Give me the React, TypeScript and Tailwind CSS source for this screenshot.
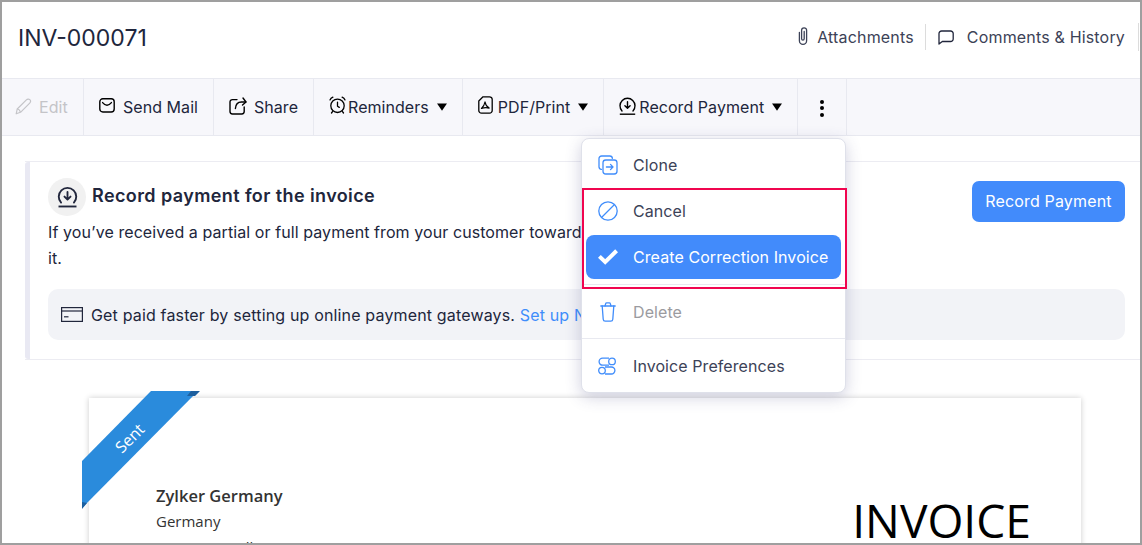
import React from 'react';

type IconProps = { className?: string };

const PencilIcon = ({ className }: IconProps) => (
  <svg viewBox="0 0 17 17" fill="none" stroke="currentColor" strokeWidth="1.2" strokeLinejoin="round" className={className}>
    <path d="M1.200 15.800l1-4.800L11.400 1.800c1-1 2.500-1 3.400-.1.900.9.900 2.400-.1 3.400l-9.200 9.200-4.300 1.500z" />
    <path d="M2.200 11c1.400.2 2.800 1.600 3.200 3.200" />
  </svg>
);

const MailIcon = ({ className }: IconProps) => (
  <svg viewBox="0 0 16 15" fill="none" stroke="currentColor" strokeWidth="1.4" className={className}>
    <rect x="0.8" y="0.8" width="14.4" height="13.2" rx="3" />
    <path d="M3.6 4.600c1.400 1.700 2.900 2.600 4.400 2.600s3-.9 4.400-2.600" strokeLinecap="round" />
  </svg>
);

const ShareIcon = ({ className }: IconProps) => (
  <svg viewBox="0 0 18 18" fill="none" stroke="currentColor" strokeWidth="1.4" strokeLinecap="round" strokeLinejoin="round" className={className}>
    <path d="M8 2.600H3.400A2.400 2.400 0 0 0 1 5v9.600A2.400 2.400 0 0 0 3.400 17h9.400a2.400 2.400 0 0 0 2.400-2.400V10" />
    <path d="M6.400 11.500c.3-3.700 2.500-6.500 6-6.500h4.400" />
    <path d="M14 1l3 4-3.500 3" />
  </svg>
);

const AlarmIcon = ({ className }: IconProps) => (
  <svg viewBox="0 0 17 18" fill="none" stroke="currentColor" strokeWidth="1.3" strokeLinecap="round" strokeLinejoin="round" className={className}>
    <circle cx="8.500" cy="9.800" r="6.700" />
    <path d="M8.500 6.200v4l1.800 1.200" />
    <path d="M1 3.900c.5-1.300 1.500-2.200 2.900-2.700" />
    <path d="M16 3.900c-.5-1.300-1.500-2.200-2.900-2.700" />
    <path d="M3.500 15.600l-1 1.400M13.500 15.600l1 1.400" />
  </svg>
);

const PdfIcon = ({ className }: IconProps) => (
  <svg viewBox="0 0 15 18" fill="none" stroke="currentColor" strokeWidth="1.3" strokeLinejoin="round" className={className}>
    <path d="M5 .8h6.400a2.700 2.700 0 0 1 2.800 2.700v10.900a2.700 2.700 0 0 1-2.800 2.800H3.600a2.700 2.700 0 0 1-2.800-2.800V5z" />
    <path d="M3.400 12.500c1.700-1.500 3.100-3.700 3.600-6.700.5 3 1.500 4.800 4.200 6.300-2.700-.8-5.200-.6-7.800.4z" strokeWidth="1.100" />
  </svg>
);

const RecordIcon = ({ className, strokeWidth = 1.4 }: IconProps & { strokeWidth?: number }) => (
  <svg viewBox="0 0 17 18" fill="none" stroke="currentColor" strokeWidth={strokeWidth} strokeLinecap="round" strokeLinejoin="round" className={className}>
    <path d="M3 13.400a7.500 7.500 0 1 1 11 0" />
    <path d="M8.500 4.200v6.400M5.900 8.200l2.600 2.600 2.600-2.600" />
    <path d="M.8 16.700h15.400" strokeLinecap="butt" />
  </svg>
);

const CaretIcon = () => (
  <svg viewBox="0 0 10 8" className="h-2 w-2.5 shrink-0" fill="currentColor">
    <path d="M0 .4h10L5 7.800z" />
  </svg>
);

const ClipIcon = ({ className }: IconProps) => (
  <svg viewBox="0 0 10 18" fill="none" stroke="currentColor" strokeWidth="1.300" strokeLinecap="round" className={className}>
    <path d="M6.200 4.500v7.300a1.300 1.300 0 0 1-2.600 0V3.300a2.500 2.500 0 0 1 5 0v10.400a3.600 3.600 0 0 1-7.200 0V5.500" />
  </svg>
);

const CommentIcon = ({ className }: IconProps) => (
  <svg viewBox="0 0 16 15" fill="none" stroke="currentColor" strokeWidth="1.300" strokeLinejoin="round" className={className}>
    <path d="M3.600 1h9A2.600 2.600 0 0 1 15.200 3.600v5.300a2.600 2.600 0 0 1-2.600 2.600H4.300L1 14V3.600A2.600 2.600 0 0 1 3.600 1z" />
  </svg>
);

const CardIcon = ({ className }: IconProps) => (
  <svg viewBox="0 0 22 15" fill="none" stroke="currentColor" strokeWidth="1.200" className={className}>
    <rect x="0.600" y="0.600" width="20.800" height="13.800" />
    <path d="M.6 4h20.800" />
    <path d="M3 9.800h4.500" />
  </svg>
);

const CloneIcon = ({ className }: IconProps) => (
  <svg viewBox="0 0 20 20" fill="none" stroke="currentColor" strokeWidth="1.300" strokeLinecap="round" strokeLinejoin="round" className={className}>
    <path d="M3.400 14.400A2.600 2.600 0 0 1 1 11.800V3.600A2.600 2.600 0 0 1 3.600 1h8.200a2.600 2.600 0 0 1 2.600 2.400" />
    <rect x="5" y="5" width="14" height="14" rx="2.800" />
    <path d="M8.400 12h6.600M12.500 9.400L15 12l-2.500 2.600" />
  </svg>
);

const CancelIcon = ({ className }: IconProps) => (
  <svg viewBox="0 0 20 20" fill="none" stroke="currentColor" strokeWidth="1.300" className={className}>
    <circle cx="10" cy="10" r="9.200" />
    <path d="M3.500 16.500l13-13" />
  </svg>
);

const CheckIcon = ({ className }: IconProps) => (
  <svg viewBox="0 0 20 16" fill="none" stroke="currentColor" strokeWidth="4" className={className}>
    <path d="M1.400 7.400l5.800 5.600L18.600 1.800" />
  </svg>
);

const TrashIcon = ({ className }: IconProps) => (
  <svg viewBox="0 0 16 20" fill="none" stroke="currentColor" strokeWidth="1.300" strokeLinecap="round" strokeLinejoin="round" className={className}>
    <path d="M.8 4h14.400" />
    <path d="M5 4l.7-2.400c.1-.5.5-.8 1-.8h2.600c.5 0 .9.3 1 .8L11 4" />
    <path d="M2.200 4l1 13.200c.1 1.100.9 2 2 2h5.600c1.100 0 1.900-.9 2-2l1-13.200" />
  </svg>
);

const PrefsIcon = ({ className }: IconProps) => (
  <svg viewBox="0 0 18 20" fill="none" stroke="currentColor" strokeWidth="1.300" className={className}>
    <path d="M11 2.200H4.600a3.500 3.500 0 0 0 0 7H11" />
    <circle cx="14" cy="5.400" r="3.300" />
    <path d="M7 11h6.400a3.500 3.500 0 0 1 0 7H7" />
    <circle cx="4" cy="14.600" r="3.300" />
  </svg>
);

const ToolbarItem = ({ icon, label, caret, gap = 'gap-2' }: { icon: React.ReactNode; label: string; caret?: boolean; gap?: string }) => (
  <div className="flex items-center border-r border-[#e8e9f0] px-[15px] text-[#21263c]">
    <div className={`flex items-center ${gap}`}>
      {icon}
      <span>{label}</span>
    </div>
    {caret && <span className="ml-2 text-black"><CaretIcon /></span>}
  </div>
);

const MenuItem = ({ icon, label, height = 'h-[44px]' }: { icon: React.ReactNode; label: string; height?: string }) => (
  <div className={`flex items-center pl-[16px] ${height}`}>
    <span className="flex w-[35px] shrink-0 text-[#408dfb]">{icon}</span>
    <span className="text-[#3c4257]">{label}</span>
  </div>
);

export default function App() {
  return (
    <div className="relative h-[545px] w-[1142px] overflow-hidden border-2 border-[#9f9f9f] bg-white font-['Inter',sans-serif] text-[16px]">
      {/* Header */}
      <header className="flex h-[76px] items-center justify-between pb-[4px] pl-4">
        <h1 className="text-[23px] text-[#21263c]">INV-000071</h1>
        <div className="mb-[2px] mr-[1px] flex items-center tracking-[0.17px] text-[#3c4257]">
          <div className="flex items-center border-r border-[#dcdcdc] py-[1px] pr-[11px]">
            <ClipIcon className="mr-[9px] h-[18px] w-[10px] -translate-y-[1px]" />
            <span>Attachments</span>
          </div>
          <div className="flex items-center pl-3 pr-[13px]">
            <CommentIcon className="mr-[13px] h-[15px] w-4 text-[#21263c]" />
            <span>Comments &amp; History</span>
          </div>
          <div className="h-7 border-r border-[#dcdcdc]" />
        </div>
      </header>

      {/* Toolbar */}
      <div className="flex h-[58px] border-y border-[#e8e9f0] bg-[#f7f7fb] tracking-[0.05px]">
        <div className="flex w-[82px] items-center gap-[7px] border-r border-[#e8e9f0] pl-[13px] text-[#c4c4c8]">
          <PencilIcon className="h-[17px] w-[17px] shrink-0 -translate-y-[1px]" />
          <span>Edit</span>
        </div>
        <ToolbarItem icon={<MailIcon className="h-[15px] w-4 -translate-y-[2px] text-black" />} label="Send Mail" />
        <ToolbarItem icon={<ShareIcon className="h-[18px] w-[18px] -translate-y-[1px] text-black" />} label="Share" gap="gap-[7px]" />
        <ToolbarItem icon={<AlarmIcon className="h-[18px] w-[17px] -translate-y-[2px] text-black" />} label="Reminders" caret gap="gap-[2px]" />
        <ToolbarItem icon={<PdfIcon className="h-[18px] w-[15px] -translate-y-[2px] text-black" />} label="PDF/Print" caret gap="gap-[5px]" />
        <ToolbarItem icon={<RecordIcon className="h-[19px] w-[17px] -translate-y-[1px] text-black" />} label="Record Payment" caret gap="gap-[3px]" />
        <div className="flex w-[49px] flex-col items-center justify-center gap-[2.500px] border-r border-[#e8e9f0] pt-[2px]">
          <span className="h-1 w-1 rounded-full bg-black" />
          <span className="h-1 w-1 rounded-full bg-black" />
          <span className="h-1 w-1 rounded-full bg-black" />
        </div>
      </div>

      {/* Banner */}
      <section className="ml-[23px] mt-[25px] flex h-[199px] border-y border-[#ececf2]">
        <div className="w-[5px] rounded-l-[3px] bg-[#e9e9f3]" />
        <div className="flex-1 pl-[18px] pr-[15px] pt-4">
          <div className="flex justify-between">
            <div>
              <div className="flex items-center gap-[6px]">
                <span className="flex h-[38px] w-[38px] items-center justify-center rounded-full bg-[#f1f1f1]">
                  <RecordIcon className="h-[21px] w-[21px] text-[#21263c]" strokeWidth={1.6} />
                </span>
                <h2 className="mb-[3px] text-[18px] font-semibold tracking-[0.4px] text-[#21263c]">Record payment for the invoice</h2>
              </div>
              <p className="mt-[3px] max-w-[760px] leading-[26px] tracking-[0.08px] text-[#21263c]">
                If you’ve received a partial or full payment from your customer towards this invoice, you can record it.
              </p>
            </div>
            <button className="mt-[3px] h-[41px] w-[153px] rounded-[7px] bg-[#428bfb] pb-[2px] tracking-[0.15px] text-white">Record Payment</button>
          </div>
          <div className="mt-[18px] flex h-[51px] items-center rounded-[10px] bg-[#f2f3f7] pl-[13px] tracking-[0.16px] text-[#21263c]">
            <CardIcon className="mr-2 h-[15px] w-[22px]" />
            <span>Get paid faster by setting up online payment gateways. <span className="text-[#408dfb]">Set up Now</span></span>
          </div>
        </div>
      </section>

      {/* Invoice sheet */}
      <section className="relative ml-[87px] mt-[38px] flex h-[300px] w-[992px] justify-between bg-white pl-[67px] pr-[50px] pt-[87px] font-['Open_Sans',sans-serif] shadow-[0_0_6px_rgba(0,0,0,0.2)]">
        <div className="text-[#333]">
          <div className="text-[16.500px] font-semibold leading-[22px]">Zylker Germany</div>
          <div className="mt-[4px] text-[15px] leading-[20px]">Germany</div>
          <div className="mt-[6px] text-[15px] leading-[20px]">germany@zylker.com</div>
        </div>
        <div className="mt-[6px] text-[46.200px] leading-[60px] text-black">INVOICE</div>
        {/* Sent ribbon */}
        <svg viewBox="0 0 120 122" className="absolute left-[-7px] top-[-7px] h-[122px] w-[120px]">
          <path d="M69 0h47L0 117V70z" fill="#2a8bdc" />
          <path d="M109 0h9l-5 5h-8zM0 111l5 1-5 6z" fill="#1c5f9e" />
        </svg>
        <span className="absolute left-[24px] top-[28px] -rotate-45 text-[16px] text-white">Sent</span>
      </section>

      {/* Dropdown menu */}
      <div className="absolute left-[579px] top-[136px] h-[255px] w-[265px] rounded-[8px] border border-[#dfe1ea] bg-white pt-[4px] tracking-[0.08px] shadow-[0_4px_16px_rgba(60,60,120,0.24)]">
        <MenuItem icon={<CloneIcon className="h-5 w-5" />} label="Clone" />
        <div className="h-[2px]" />
        <MenuItem icon={<CancelIcon className="h-5 w-5" />} label="Cancel" />
        <div className="mx-[4px] mt-[2px] flex h-[44px] items-center rounded-[8px] bg-[#428bfb] pl-[12px] text-white">
          <CheckIcon className="mr-[15px] h-4 w-5 shrink-0" />
          <span>Create Correction Invoice</span>
        </div>
        <div className="mt-[5px] border-t border-[#e8e9f0]" />
        <div className="flex h-[53px] items-center pl-[18px]">
          <span className="flex w-[33px] shrink-0 text-[#408dfb]"><TrashIcon className="h-5 w-4" /></span>
          <span className="text-[#9b9b9f]">Delete</span>
        </div>
        <div className="border-t border-[#e8e9f0]" />
        <MenuItem icon={<PrefsIcon className="h-5 w-[18px]" />} label="Invoice Preferences" height="h-[54px]" />
      </div>

      {/* Highlight */}
      <div className="absolute left-[580px] top-[186px] h-[101px] w-[265px] border-2 border-[#f0054f]" />
    </div>
  );
}
